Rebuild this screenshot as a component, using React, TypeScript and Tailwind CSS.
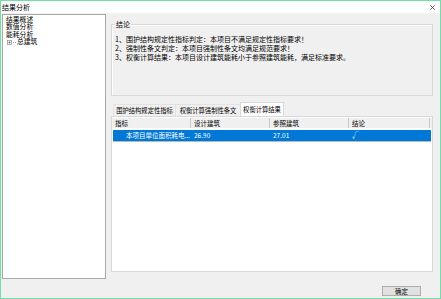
import React from 'react';

const cols = ['指标', '设计建筑', '参照建筑', '结论'];

export default function App() {
  return (
    <div className="w-[441px] h-[299px] border border-[#72dfa9] bg-[#f0f0f0] flex flex-col overflow-hidden text-black font-['Noto_Sans_CJK_SC',sans-serif] text-[7px]">
      {/* title bar */}
      <div className="h-[12px] bg-white flex items-center justify-between pl-[1px] pr-[5px] leading-[7px]">
        <span>结果分析</span>
        <svg width="5" height="5" viewBox="0 0 5 5" className="mt-[1px]">
          <path d="M0.3 0.3 L4.7 4.7 M4.7 0.3 L0.3 4.7" stroke="#444" strokeWidth="0.8" />
        </svg>
      </div>

      <div className="flex h-[267px]">
        {/* tree */}
        <div className="ml-[1px] mt-[1px] w-[104px] h-[265px] bg-white border border-[#a9a9a9] pl-[3px] pt-[0.5px] text-[6.8px] leading-[7.6px] font-['Liberation_Sans','Noto_Sans_CJK_SC',sans-serif]">
          <div>结果概述</div>
          <div>数值分析</div>
          <div>能耗分析</div>
          <div className="flex items-center pl-[1px]">
            <svg width="5" height="5" viewBox="0 0 5 5">
              <rect x="0.5" y="0.5" width="4" height="4" fill="white" stroke="#8a8a8a" strokeWidth="0.7" />
              <path d="M1.5 2.5 H3.5 M2.5 1.5 V3.5" stroke="#333" strokeWidth="0.6" />
            </svg>
            <span className="w-[3px] border-t border-dotted border-[#999] mx-[1px]" />
            <span>总建筑</span>
          </div>
        </div>

        {/* right column */}
        <div className="ml-[5px] mr-[7px] flex-1 flex flex-col">
          <div className="relative mt-[11px] h-[72px] border border-[#d9d9d9] shadow-[inset_1px_1px_0_#fff] pl-[3px] pt-[10px] leading-[9px]">
            <span className="absolute -top-[4px] left-[3px] bg-[#f0f0f0] px-[1px] leading-[7px]">结论</span>
            <div>1、围护结构规定性指标判定：本项目不满足规定性指标要求！</div>
            <div>2、强制性条文判定：本项目强制性条文均满足规范要求！</div>
            <div>3、权衡计算结果：本项目设计建筑能耗小于参照建筑能耗，满足标准要求。</div>
          </div>

          {/* tabs */}
          <div className="mt-[6px] flex items-end pl-[2px] text-[6.3px] leading-[7px] h-[14px]">
            <div className="w-[62px] h-[12px] flex items-center justify-center border-l border-t border-[#e2e2e2]">围护结构规定性指标</div>
            <div className="w-[65px] h-[12px] flex items-center justify-center border-l border-t border-[#e2e2e2]">权衡计算强制性条文</div>
            <div className="w-[44px] h-[14px] flex items-center justify-center bg-white border-x border-t border-[#d9d9d9]">权衡计算结果</div>
          </div>

          {/* panel */}
          <div className="h-[156px] bg-white border border-[#d9d9d9] text-[6.5px] leading-[7px]">
            <div className="flex h-[11px] bg-[#f0f0f0] border-t border-white">
              {cols.map((c, i) => (
                <div
                  key={c}
                  className={`flex items-center pl-[3px] border-r border-[#c8c8c8] ${i === 3 ? 'w-[81px]' : 'w-[79px]'}`}
                >
                  {c}
                </div>
              ))}
            </div>
            <div className="mt-[2px] ml-[1px] mr-[1px] flex h-[12px] bg-[#0078d7] text-white border-b border-[#b8b8b8]">
              <div className="w-[78px] flex items-center pl-[13px] whitespace-nowrap overflow-hidden">本项目单位面积耗电...</div>
              <div className="w-[79px] flex items-center pl-[3px]">26.90</div>
              <div className="w-[79px] flex items-center pl-[3px]">27.01</div>
              <div className="flex-1 flex items-center pl-[3px]">√</div>
            </div>
          </div>
        </div>
      </div>

      {/* footer */}
      <div className="flex-1 flex justify-end items-start pt-[6px] pr-[19px]">
        <button className="w-[39px] h-[10px] bg-[#e1e1e1] border border-[#adadad] flex items-center justify-center text-[6.5px] leading-[7px]">
          确定
        </button>
      </div>
    </div>
  );
}
